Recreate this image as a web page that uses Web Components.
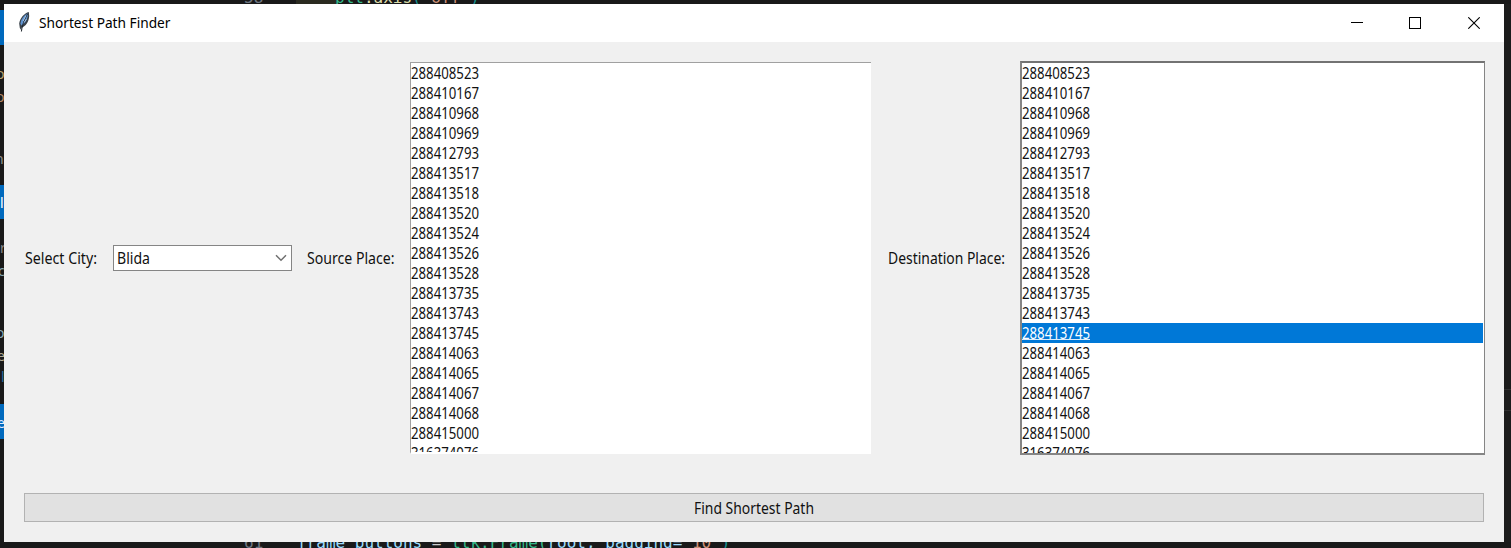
<!DOCTYPE html>
<html lang="en">
<head>
<meta charset="utf-8">
<title>Shortest Path Finder</title>
<style>
html,body{margin:0;height:100%;overflow:hidden}
body{background:#181818;font-family:"Noto Sans","Open Sans",sans-serif;font-size:15.5px;color:#111}
</style>
</head>
<body>
<desk-top></desk-top>
<script>
const define = (name, html, setup) => customElements.define(name, class extends HTMLElement {
  connectedCallback() {
    if (this.shadowRoot) return;
    this.attachShadow({mode: 'open'}).innerHTML = html;
    if (setup) setup(this, this.shadowRoot);
  }
});

/* A single line of text condensed to a given width */
define('fit-text', `<style>
:host{display:block;white-space:pre;line-height:20px;height:20px}
span{display:inline-block;transform-origin:0 50%}
</style><span></span>`, (el, root) => {
  const span = root.querySelector('span'), w = +el.getAttribute('w');
  span.textContent = el.getAttribute('text');
  el.style.width = w + 'px';
  span.style.transform = 'translateY(-.5px) scaleX(' + w / span.getBoundingClientRect().width + ')';
});

define('title-bar', `<style>
:host{display:flex;height:38px;background:#fff;align-items:center;color:#000}
.logo{width:14px;height:22px;margin:0 8px 2px 13px}
fit-text{flex:1;margin-bottom:2px;font-size:15px}
.b{width:58.5px;display:flex;justify-content:center}
.b svg{display:block}
.controls{display:flex;margin-right:1px}
</style>
<svg class="logo" viewBox="0 0 14 22"><path d="M11.8 1C7.5 2 3 7 2.2 12.6L2.8 17l1.5 2.2.4-2.6C8.8 15.3 11.8 11 12.2 5Z" fill="#384048"/><path d="M11 2.2C7 4 3.8 8.4 3.4 12.7l1.1 1.9C8.6 11.7 11.2 7 11 2.2Z" fill="#5f93d0"/><path d="M10.8 2.5C8.3 7 5.6 12 4.4 20.5" fill="none" stroke="#1d242b" stroke-width="1"/><path d="M9 4.7 6.1 10M9.5 8 7 11.5" stroke="#b6d0ea" stroke-width=".8"/></svg>
<fit-text text="Shortest Path Finder" w="131.5"></fit-text>
<div class="controls">
<div class="b"><svg width="12" height="12" shape-rendering="crispEdges"><path d="M0 5.5h12" stroke="#000"/></svg></div>
<div class="b"><svg width="12" height="12" shape-rendering="crispEdges"><path d="M.5.5h11v11H.5z" fill="none" stroke="#000"/></svg></div>
<div class="b"><svg width="12" height="12"><path d="M.3.3l11.4 11.4M11.7.3L.3 11.7" stroke="#000" stroke-width="1.1"/></svg></div>
</div>`);

define('combo-box', `<style>
:host{display:flex;box-sizing:border-box;width:179px;height:26px;border:1px solid #858585;background:#fff;align-items:center;padding:0 4px 0 3px;justify-content:space-between}
svg{display:block}
</style><fit-text text="Blida" w="33"></fit-text>
<svg width="12" height="8"><path d="M1 1.2l5 5 5-5" fill="none" stroke="#707070" stroke-width="1.5"/></svg>`);

define('list-box', `<style>
:host{display:block;box-sizing:border-box;overflow:hidden;background:#fff}
:host([plain]){width:461px;height:392px;border:solid #a0a0a0;border-width:1px 0 0 1px;border-bottom:2px solid #fff}
:host([active]){width:465px;height:394px;border:2px solid #858585;border-right-width:1px;border-top-color:#737373}
.row{height:20px;margin-right:1px}
:host([active]) .row{padding-left:.3px}
.sel{background:#0078d7;color:#fff}
.sel fit-text{background:linear-gradient(#d9ecfb,#d9ecfb) 0 16px/100% 1px no-repeat}
</style>`, (el, root) => {
  ['288408523','288410167','288410968','288410969','288412793','288413517','288413518','288413520','288413524','288413526','288413528','288413735','288413743','288413745','288414063','288414065','288414067','288414068','288415000','316374076'].forEach(t => {
    const row = document.createElement('div');
    row.className = 'row' + (t === el.getAttribute('selected') ? ' sel' : '');
    row.innerHTML = `<fit-text text="${t}" w="68"></fit-text>`;
    root.append(row);
  });
});

define('push-button', `<style>
:host{display:flex;box-sizing:border-box;height:29px;align-items:center;justify-content:center;background:#e1e1e1;border:1.5px solid #b2b2b2}
</style><fit-text text="Find Shortest Path" w="120"></fit-text>`);

define('app-window', `<style>
:host{display:flex;flex-direction:column;background:#f0f0f0;overflow:hidden}
.form{display:grid;grid-template-columns:73px 179px 88px 461px 118px 465px;column-gap:15px;align-items:center;margin:19px 0 0 21px;height:394px}
list-box[plain]{align-self:start;margin-top:1px}
.form>:nth-child(3){margin-left:-.5px}
.form>:nth-child(5){margin-left:1.5px}
.form>:nth-child(6){margin-left:1px}
push-button{margin:38px 20px 0 20px}
</style>
<title-bar></title-bar>
<div class="form">
<fit-text text="Select City:" w="72"></fit-text>
<combo-box></combo-box>
<fit-text text="Source Place:" w="87.5"></fit-text>
<list-box plain></list-box>
<fit-text text="Destination Place:" w="117"></fit-text>
<list-box active selected="288413745"></list-box>
</div>
<push-button></push-button>`);

/* Editor left open behind the window; only its edges are visible */
define('code-strip', `<style>
:host{display:block;position:relative;overflow:hidden;font:16px/20px "DejaVu Sans Mono",monospace;white-space:pre;color:#9cdcfe}
span{position:absolute}
i{font-style:normal}
.n{color:#6e7681}.g{color:#35b88a}.y{color:#dcdcaa}.o{color:#ce9178}.w{color:#ccc}.t{color:#159090}
</style>`, (el, root) => {
  const add = (x, y, html, css = '') => root.innerHTML += `<span style="left:${x}px;top:${y}px;${css}">${html}</span>`;
  const side = el.getAttribute('side');
  if (side === 'top') {
    add(296, 0, '', 'width:40px;height:4px;background:#2a2a20');
    add(244, -12, '<i class="n">58</i>');
    add(335, -12, '<i class="g">plt</i><i class="y">.axis</i><i class="t">(</i><i class="o">\'off\'</i><i class="t">)</i>');
  } else if (side === 'bottom') {
    add(244, -9, '61', 'color:#6e7681');
    add(297, -9, 'frame_buttons <i class="w">=</i> <i class="g">ttk.Frame(</i>root, padding=<i class="o">"10"</i><i class="t">)</i>');
  } else {
    for (const [y, h] of [[6,35],[181,34],[400,35]]) add(0, y, '', `width:4px;height:${h}px;background:#0069bd`);
    for (const [x, t, y, c] of [[-4,'o',60,'#b5a06e'],[-4,'o',83,'#b08565'],[-5,'n',145,'#929292'],[0,'l',189,'#fff'],[0,'r',234,'#888'],[-2,'c',257,'#89aab5'],[-4,'o',319,'#89aab5'],[-3,'e',342,'#b0a995'],[1,'l',363,'#286d9f'],[-3,'e',409,'#e0eaff']])
      add(x, y, t, `font:14px/20px 'Noto Sans',sans-serif;color:${c}`);
  }
});

define('desk-top', `<style>
:host{display:grid;width:1511px;height:548px;grid-template:4px 538px 6px / 4px 1500px 7px;background:#191919;overflow:hidden}
.wide{grid-column:1/-1}
.edge{background:linear-gradient(#303030,#303030) 0 385px/7px 1px no-repeat,linear-gradient(#303030,#303030) 0 406px/7px 1px no-repeat,#1c1c1c}
</style>
<code-strip class="wide" side="top"></code-strip>
<code-strip side="left"></code-strip>
<app-window></app-window>
<div class="edge"></div>
<code-strip class="wide" side="bottom"></code-strip>`);
</script>
</body>
</html>
